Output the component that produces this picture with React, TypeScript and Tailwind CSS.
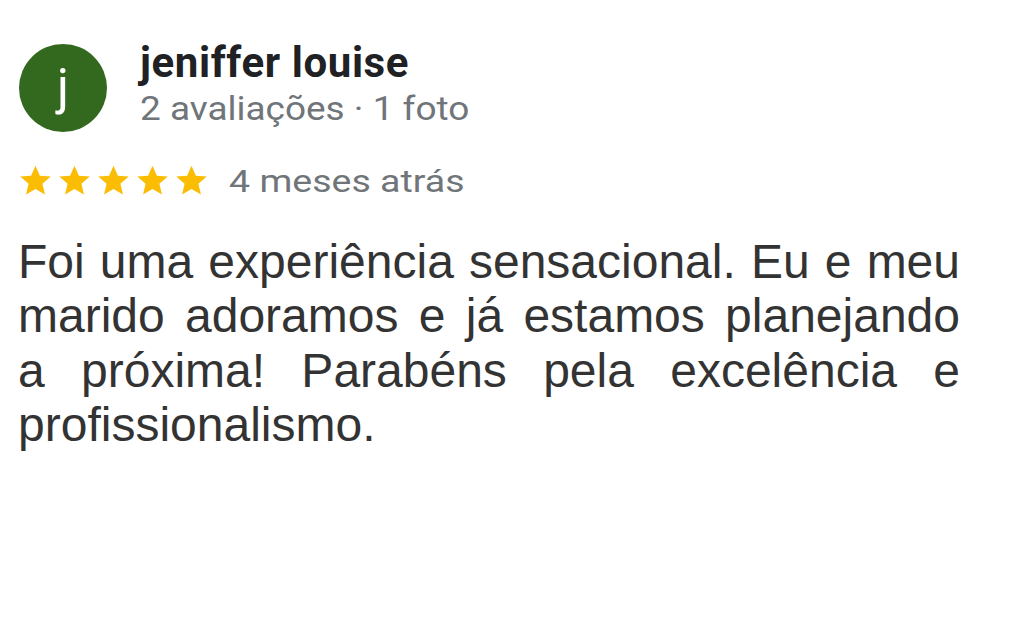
import React from "react";

function Star() {
  return (
    <svg width="39" height="34" viewBox="-1.8 0 27.6 24" className="block">
      <path
        fill="#fbbc04"
        d="M12 1.2l3.1 7.1 7.7.6-5.9 5.1 1.8 7.6L12 17.6l-6.7 4 1.8-7.6-5.9-5.1 7.7-.6z"
      />
    </svg>
  );
}

export default function App() {
  return (
    <div className="w-[1020px] h-[631px] bg-white overflow-hidden">
      <div className="flex items-center pt-[44px] pl-[19px]">
        <div className="w-[88px] h-[88px] rounded-full bg-[#33691e] flex items-center justify-center text-white text-[50px] font-['Roboto',sans-serif] leading-none pb-[2px]">
          j
        </div>
        <div className="ml-[33px] flex flex-col font-['Roboto',sans-serif]">
          <div className="text-[42px] font-bold text-[#202124] leading-[46px] -mt-[8px] tracking-[0.6px]">jeniffer louise</div>
          <div className="text-[33px] text-[#70757a] leading-[40px] mt-[3px] origin-left scale-x-[1.12]">2 avaliações · 1 foto</div>
        </div>
      </div>
      <div className="flex items-center pl-[16px] mt-[32px]">
        <div className="flex">
          <Star />
          <Star />
          <Star />
          <Star />
          <Star />
        </div>
        <div className="ml-[18px] text-[31px] text-[#70757a] font-['Roboto',sans-serif] leading-none origin-left scale-x-[1.21]">4 meses atrás</div>
      </div>
      <p className="mt-[37px] ml-[18px] w-[942px] text-justify text-[48px] leading-[54.3px] text-[#333333] font-['Liberation_Sans',Arial,sans-serif]">
        Foi uma experiência sensacional. Eu e meu marido adoramos e já estamos planejando a próxima! Parabéns pela excelência e profissionalismo.
      </p>
    </div>
  );
}
